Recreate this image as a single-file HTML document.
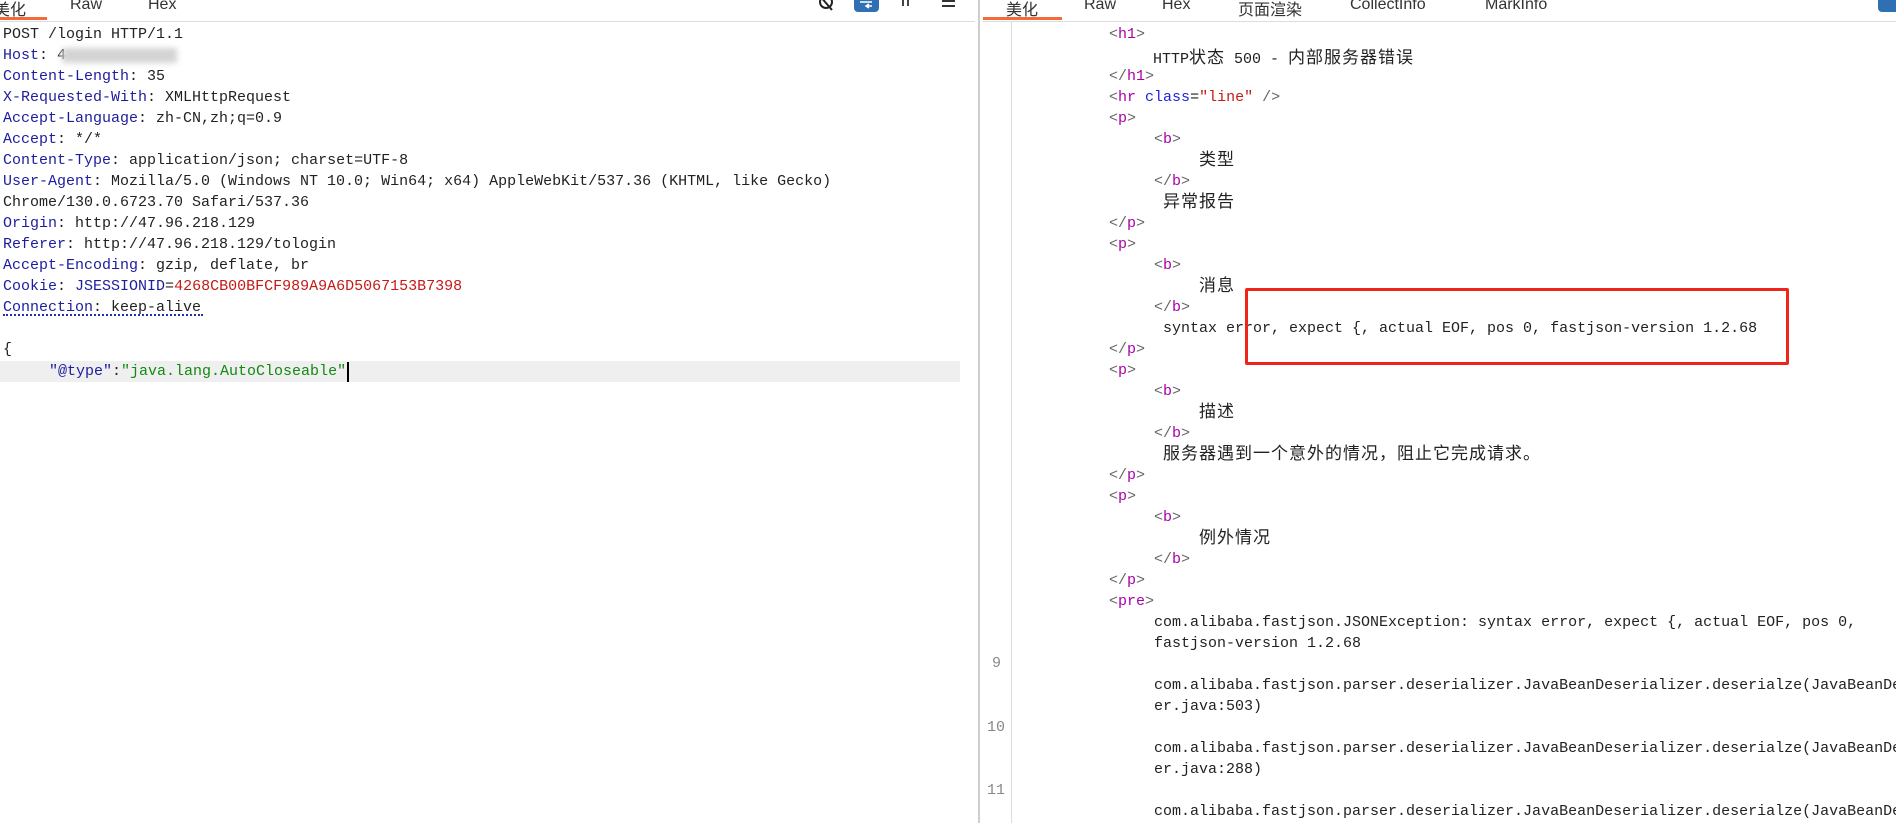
<!DOCTYPE html>
<html><head><meta charset="utf-8"><style>
body{margin:0;width:1896px;height:823px;overflow:hidden;background:#fff;position:relative;font-family:"Liberation Mono","Noto Sans CJK SC",monospace;font-size:15px;color:#222}
.l{position:absolute;white-space:pre;line-height:21px;height:21px}
.c{font-family:"Noto Sans CJK SC",sans-serif;font-size:17px;letter-spacing:1px}
.l.c{margin-top:-3px}
.k{color:#1d1d9e}.r{color:#c41a16}.g{color:#118a11}.t{color:#a0a}.br{color:#666}.a{color:#2222dd}
.tab{position:absolute;top:-4px;font-family:"Liberation Sans","Noto Sans CJK SC",sans-serif;font-size:16px;color:#333;white-space:nowrap}
</style></head><body>
<div class="tab" style="left:-6px">美化</div>
<div class="tab" style="left:70px">Raw</div>
<div class="tab" style="left:148px">Hex</div>
<div style="position:absolute;left:0;top:17px;width:47px;height:3px;background:#f26b3a"></div>
<div style="position:absolute;left:0;top:21px;width:975px;height:1px;background:#ddd"></div>
<svg style="position:absolute;left:818px;top:0" width="20" height="12"><circle cx="8" cy="2" r="6" fill="none" stroke="#222" stroke-width="2"/><line x1="2" y1="-4" x2="14" y2="10" stroke="#222" stroke-width="2"/></svg>
<div style="position:absolute;left:854px;top:-4px;width:25px;height:16px;background:#2f6fb3;border-radius:4px"></div>
<svg style="position:absolute;left:858px;top:0" width="18" height="10"><path d="M2 2h12M8 6h6M11 4l-3 2 3 2" fill="none" stroke="#fff" stroke-width="1.5"/></svg>
<div style="position:absolute;left:902px;top:0;width:2px;height:6px;background:#444"></div><div style="position:absolute;left:907px;top:0;width:2px;height:6px;background:#444"></div>
<div style="position:absolute;left:942px;top:0;width:13px;height:2px;background:#333"></div><div style="position:absolute;left:942px;top:5px;width:13px;height:2px;background:#333"></div>
<div style="position:absolute;left:978px;top:0;width:2px;height:823px;background:#cfcfcf"></div>
<div class="l" style="left:3px;top:24px">POST /login HTTP/1.1</div>
<div class="l" style="left:3px;top:45px"><span class="k">Host</span>: 4</div>
<div style="position:absolute;left:62px;top:48px;width:115px;height:15px;background:#d4d4d4;filter:blur(3px)"></div>
<div class="l" style="left:3px;top:66px"><span class="k">Content-Length</span>: 35</div>
<div class="l" style="left:3px;top:87px"><span class="k">X-Requested-With</span>: XMLHttpRequest</div>
<div class="l" style="left:3px;top:108px"><span class="k">Accept-Language</span>: zh-CN,zh;q=0.9</div>
<div class="l" style="left:3px;top:129px"><span class="k">Accept</span>: */*</div>
<div class="l" style="left:3px;top:150px"><span class="k">Content-Type</span>: application/json; charset=UTF-8</div>
<div class="l" style="left:3px;top:171px"><span class="k">User-Agent</span>: Mozilla/5.0 (Windows NT 10.0; Win64; x64) AppleWebKit/537.36 (KHTML, like Gecko)</div>
<div class="l" style="left:3px;top:192px">Chrome/130.0.6723.70 Safari/537.36</div>
<div class="l" style="left:3px;top:213px"><span class="k">Origin</span>: http://47.96.218.129</div>
<div class="l" style="left:3px;top:234px"><span class="k">Referer</span>: http://47.96.218.129/tologin</div>
<div class="l" style="left:3px;top:255px"><span class="k">Accept-Encoding</span>: gzip, deflate, br</div>
<div class="l" style="left:3px;top:276px"><span class="k">Cookie</span>: <span class="k">JSESSIONID</span>=<span class="r">4268CB00BFCF989A9A6D5067153B7398</span></div>
<div class="l" style="left:3px;top:297px"><span class="k">Connection</span>: keep-alive</div>
<div style="position:absolute;left:3px;top:314px;width:200px;border-top:2px dotted #2233aa"></div>
<div class="l" style="left:3px;top:339px">{</div>
<div style="position:absolute;left:0;top:361px;width:960px;height:21px;background:#efefef"></div>
<div class="l" style="left:49px;top:361px"><span class="k">"@type"</span>:<span class="g">"java.lang.AutoCloseable"</span></div>
<div style="position:absolute;left:347px;top:362px;width:2px;height:20px;background:#000"></div>
<div class="tab" style="left:1006px">美化</div>
<div class="tab" style="left:1084px">Raw</div>
<div class="tab" style="left:1162px">Hex</div>
<div class="tab" style="left:1238px">页面渲染</div>
<div class="tab" style="left:1350px">CollectInfo</div>
<div class="tab" style="left:1485px">MarkInfo</div>
<div style="position:absolute;left:983px;top:17px;width:79px;height:3px;background:#f26b3a"></div>
<div style="position:absolute;left:983px;top:21px;width:913px;height:1px;background:#ddd"></div>
<div style="position:absolute;left:1878px;top:-4px;width:22px;height:16px;background:#2f6fb3;border-radius:4px"></div>
<div style="position:absolute;left:1011px;top:22px;width:1px;height:801px;background:#ddd"></div>
<div class="l" style="left:992px;top:653px;color:#888">9</div>
<div class="l" style="left:987px;top:717px;color:#888">10</div>
<div class="l" style="left:987px;top:780px;color:#888">11</div>
<div class="l" style="left:1109px;top:24px"><span class="br">&lt;</span><span class="t">h1</span><span class="br">&gt;</span></div>
<div class="l" style="left:1153px;top:45px">HTTP<span class="c">状态</span> 500 - <span class="c">内部服务器错误</span></div>
<div class="l" style="left:1109px;top:66px"><span class="br">&lt;/</span><span class="t">h1</span><span class="br">&gt;</span></div>
<div class="l" style="left:1109px;top:87px"><span class="br">&lt;</span><span class="t">hr</span> <span class="a">class</span>=<span class="r">"line"</span> <span class="br">/&gt;</span></div>
<div class="l" style="left:1109px;top:108px"><span class="br">&lt;</span><span class="t">p</span><span class="br">&gt;</span></div>
<div class="l" style="left:1154px;top:129px"><span class="br">&lt;</span><span class="t">b</span><span class="br">&gt;</span></div>
<div class="l c" style="left:1199px;top:150px">类型</div>
<div class="l" style="left:1154px;top:171px"><span class="br">&lt;/</span><span class="t">b</span><span class="br">&gt;</span></div>
<div class="l c" style="left:1163px;top:192px">异常报告</div>
<div class="l" style="left:1109px;top:213px"><span class="br">&lt;/</span><span class="t">p</span><span class="br">&gt;</span></div>
<div class="l" style="left:1109px;top:234px"><span class="br">&lt;</span><span class="t">p</span><span class="br">&gt;</span></div>
<div class="l" style="left:1154px;top:255px"><span class="br">&lt;</span><span class="t">b</span><span class="br">&gt;</span></div>
<div class="l c" style="left:1199px;top:276px">消息</div>
<div class="l" style="left:1154px;top:297px"><span class="br">&lt;/</span><span class="t">b</span><span class="br">&gt;</span></div>
<div class="l" style="left:1154px;top:318px"> syntax error, expect {, actual EOF, pos 0, fastjson-version 1.2.68</div>
<div class="l" style="left:1109px;top:339px"><span class="br">&lt;/</span><span class="t">p</span><span class="br">&gt;</span></div>
<div class="l" style="left:1109px;top:360px"><span class="br">&lt;</span><span class="t">p</span><span class="br">&gt;</span></div>
<div class="l" style="left:1154px;top:381px"><span class="br">&lt;</span><span class="t">b</span><span class="br">&gt;</span></div>
<div class="l c" style="left:1199px;top:402px">描述</div>
<div class="l" style="left:1154px;top:423px"><span class="br">&lt;/</span><span class="t">b</span><span class="br">&gt;</span></div>
<div class="l c" style="left:1163px;top:444px">服务器遇到一个意外的情况，阻止它完成请求。</div>
<div class="l" style="left:1109px;top:465px"><span class="br">&lt;/</span><span class="t">p</span><span class="br">&gt;</span></div>
<div class="l" style="left:1109px;top:486px"><span class="br">&lt;</span><span class="t">p</span><span class="br">&gt;</span></div>
<div class="l" style="left:1154px;top:507px"><span class="br">&lt;</span><span class="t">b</span><span class="br">&gt;</span></div>
<div class="l c" style="left:1199px;top:528px">例外情况</div>
<div class="l" style="left:1154px;top:549px"><span class="br">&lt;/</span><span class="t">b</span><span class="br">&gt;</span></div>
<div class="l" style="left:1109px;top:570px"><span class="br">&lt;/</span><span class="t">p</span><span class="br">&gt;</span></div>
<div class="l" style="left:1109px;top:591px"><span class="br">&lt;</span><span class="t">pre</span><span class="br">&gt;</span></div>
<div class="l" style="left:1154px;top:612px">com.alibaba.fastjson.JSONException: syntax error, expect {, actual EOF, pos 0,</div>
<div class="l" style="left:1154px;top:633px">fastjson-version 1.2.68</div>
<div class="l" style="left:1154px;top:675px">com.alibaba.fastjson.parser.deserializer.JavaBeanDeserializer.deserialze(JavaBeanDeserializ</div>
<div class="l" style="left:1154px;top:696px">er.java:503)</div>
<div class="l" style="left:1154px;top:738px">com.alibaba.fastjson.parser.deserializer.JavaBeanDeserializer.deserialze(JavaBeanDeserializ</div>
<div class="l" style="left:1154px;top:759px">er.java:288)</div>
<div class="l" style="left:1154px;top:801px">com.alibaba.fastjson.parser.deserializer.JavaBeanDeserializer.deserialze(JavaBeanDeserializ</div>
<div style="position:absolute;left:1245px;top:288px;width:538px;height:71px;border:3px solid #f0241b;border-radius:2px"></div>
</body></html>
